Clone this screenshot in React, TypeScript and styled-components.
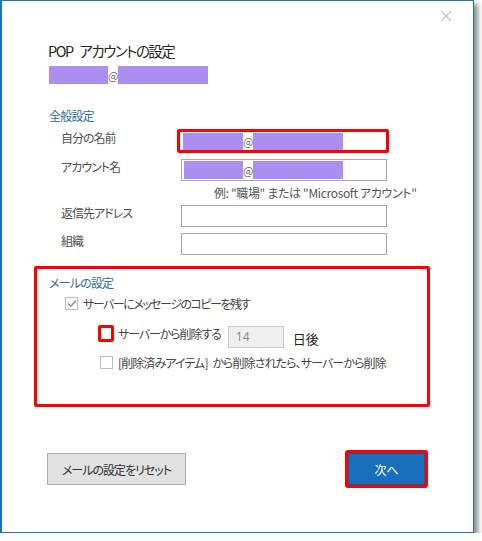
import React from 'react';
import styled, { createGlobalStyle } from 'styled-components';

const GlobalStyle = createGlobalStyle`
  html, body {
    margin: 0;
    padding: 0;
    background: #ffffff;
  }
  body {
    font-family: 'Noto Sans CJK JP', 'Noto Sans', sans-serif;
    font-feature-settings: 'palt';
    color: #333333;
  }
  button {
    font-feature-settings: 'palt';
  }
`;

type HighlightProps = {
  highlighted?: boolean;
};

const App: React.FC = () => {
  return (
    <>
      <GlobalStyle />
      <Dialog>
        <CloseButton aria-label="閉じる">
          <svg width="12" height="12" viewBox="0 0 12 12">
            <path d="M1 1 L11 11 M11 1 L1 11" stroke="#c4c4c4" strokeWidth="1.1" />
          </svg>
        </CloseButton>

        <Title>POP アカウントの設定</Title>
        <AccountLine>
          <Redacted width={59} />
          <At>@</At>
          <Redacted width={90} />
        </AccountLine>

        <SectionTitle>全般設定</SectionTitle>
        <FormGrid>
          <Label>自分の名前</Label>
          <TextBox highlighted>
            <Redacted width={60} />
            <At>@</At>
            <Redacted width={90} />
          </TextBox>

          <Label>アカウント名</Label>
          <TextBox>
            <Redacted width={59} />
            <At>@</At>
            <Redacted width={90} />
          </TextBox>

          <span />
          <Hint>例: "職場" または "Microsoft アカウント"</Hint>

          <Label>返信先アドレス</Label>
          <TextBox />

          <Label>組織</Label>
          <TextBox />
        </FormGrid>

        <MailBox>
          <SectionTitle>メールの設定</SectionTitle>
          <CheckRow>
            <CheckBox>
              <svg width="10" height="9" viewBox="0 0 10 9">
                <path d="M1 4.5 L3.8 7.3 L9 1.5" fill="none" stroke="#8a8a8a" strokeWidth="1.3" />
              </svg>
            </CheckBox>
            サーバーにメッセージのコピーを残す
          </CheckRow>
          <DeleteRow>
            <CheckBox highlighted />
            <span>サーバーから削除する</span>
            <DaysInput>14</DaysInput>
            <Days>日後</Days>
          </DeleteRow>
          <SubCheckRow>
            <CheckBox />
            [削除済みアイテム] から削除されたら、サーバーから削除
          </SubCheckRow>
        </MailBox>

        <Footer>
          <ResetButton>メールの設定をリセット</ResetButton>
          <NextButton>次へ</NextButton>
        </Footer>
      </Dialog>
    </>
  );
};

const Dialog = styled.div`
  position: relative;
  box-sizing: border-box;
  width: 474px;
  height: 533px;
  border: 1px solid #1a73c8;
  border-left-width: 2px;
  background: #ffffff;
  box-shadow: 4px 4px 5px rgba(0, 0, 0, 0.45);
  padding: 40px 0 0 46px;
`;

const CloseButton = styled.div`
  position: absolute;
  top: 9px;
  right: 21px;
  width: 12px;
  height: 12px;
  line-height: 0;
`;

const Title = styled.div`
  font-size: 14.5px;
  line-height: 20px;
  color: #262626;
  letter-spacing: -1.5px;
  word-spacing: 5px;
`;

const AccountLine = styled.div`
  display: flex;
  align-items: center;
  height: 18px;
  margin-top: 5px;
  margin-left: 1px;
`;

const Redacted = styled.span<{ width: number }>`
  display: inline-block;
  width: ${({ width }) => width}px;
  height: 18px;
  background: #ab8ef0;
`;

const At = styled.span`
  display: inline-block;
  width: 10px;
  font-size: 11px;
  line-height: 18px;
  color: #666666;
  text-align: center;
`;

const SectionTitle = styled.div`
  font-size: 12px;
  line-height: 16px;
  color: #2e6aa6;
  margin-top: 24px;
  margin-left: 1px;
  letter-spacing: -0.8px;
`;

const FormGrid = styled.div`
  display: grid;
  grid-template-columns: 120px 206px;
  grid-auto-rows: auto;
  row-gap: 6px;
  align-items: center;
  margin-top: 5px;
  padding-left: 13px;
`;

const Label = styled.div`
  font-size: 12px;
  line-height: 14px;
  color: #505050;
  margin-top: -7px;
  letter-spacing: -1px;
`;

const TextBox = styled.div<HighlightProps>`
  box-sizing: border-box;
  display: flex;
  align-items: center;
  height: ${({ highlighted }) => (highlighted ? '24px' : '22px')};
  width: ${({ highlighted }) => (highlighted ? '212px' : '206px')};
  margin-left: ${({ highlighted }) => (highlighted ? '-4px' : '0')};
  padding-left: ${({ highlighted }) => (highlighted ? '3px' : '2px')};
  border: ${({ highlighted }) =>
    highlighted ? '3px solid #ff0000' : '1px solid #a9a9a9'};
  border-radius: ${({ highlighted }) => (highlighted ? '2px' : '0')};
  background: #ffffff;

  ${Redacted} {
    height: ${({ highlighted }) => (highlighted ? '17px' : '18px')};
  }
`;

const Hint = styled.div`
  font-size: 12px;
  line-height: 12px;
  color: #555555;
  margin-left: 33px;
  white-space: nowrap;
  letter-spacing: -0.35px;
`;

const MailBox = styled.div`
  box-sizing: border-box;
  width: 396px;
  height: 141px;
  margin: 11px 0 0 -14px;
  border: 3px solid #ff0000;
  border-radius: 2px;
  padding: 0 0 0 11px;

  ${SectionTitle} {
    margin-top: 6px;
  }
`;

const CheckRow = styled.div`
  display: flex;
  align-items: center;
  gap: 5px;
  font-size: 12px;
  color: #444444;
  margin: 5px 0 0 17px;
  height: 14px;
  white-space: nowrap;
  letter-spacing: -1.5px;
`;

const CheckBox = styled.span<HighlightProps>`
  box-sizing: border-box;
  display: inline-flex;
  align-items: center;
  justify-content: center;
  flex: none;
  width: ${({ highlighted }) => (highlighted ? '16px' : '13px')};
  height: ${({ highlighted }) => (highlighted ? '17px' : '13px')};
  margin-left: ${({ highlighted }) => (highlighted ? '-2px' : '0')};
  border: ${({ highlighted }) =>
    highlighted ? '3px solid #ff0000' : '1px solid #bdbdbd'};
  border-radius: ${({ highlighted }) => (highlighted ? '2px' : '0')};
  background: #ffffff;
`;

const DeleteRow = styled.div`
  display: flex;
  align-items: center;
  font-size: 12px;
  color: #444444;
  margin: 16px 0 0 52px;
  height: 22px;
  white-space: nowrap;

  ${CheckBox} {
    margin-right: 4px;
    margin-top: -8px;
  }

  & > span:nth-child(2) {
    margin-top: -8px;
    letter-spacing: -1.1px;
  }
`;

const DaysInput = styled.div`
  box-sizing: border-box;
  width: 56px;
  height: 22px;
  margin-left: 7px;
  border: 1px solid #cccccc;
  background: #efefef;
  color: #8c8c8c;
  font-family: 'Segoe UI', 'Noto Sans', sans-serif;
  font-size: 12px;
  line-height: 20px;
  padding-left: 7px;
`;

const Days = styled.span`
  font-size: 13px;
  color: #1e1e1e;
  margin: 3px 0 0 9px;
`;

const SubCheckRow = styled(CheckRow)`
  margin: 7px 0 0 52px;
  gap: 5px;
  letter-spacing: -0.9px;
  word-spacing: 3px;
`;

const Footer = styled.div`
  display: flex;
  justify-content: space-between;
  align-items: center;
  width: 380px;
  margin-top: 43px;
`;

const ResetButton = styled.button`
  box-sizing: border-box;
  width: 139px;
  height: 32px;
  border: 1px solid #adadad;
  background: #e1e1e1;
  color: #333333;
  font-family: 'Noto Sans CJK JP', 'Noto Sans', sans-serif;
  font-size: 12px;
  letter-spacing: -1px;
  padding: 0;
  margin-left: -1px;
`;

const NextButton = styled.button`
  box-sizing: border-box;
  width: 83px;
  height: 38px;
  border: 3px solid #ff0000;
  border-radius: 3px;
  box-shadow: inset 0 0 0 1px #1a5a9c;
  background: #1a6fbd;
  color: #ffffff;
  font-family: 'Noto Sans CJK JP', 'Noto Sans', sans-serif;
  font-size: 12px;
  padding: 0;
`;

export default App;
